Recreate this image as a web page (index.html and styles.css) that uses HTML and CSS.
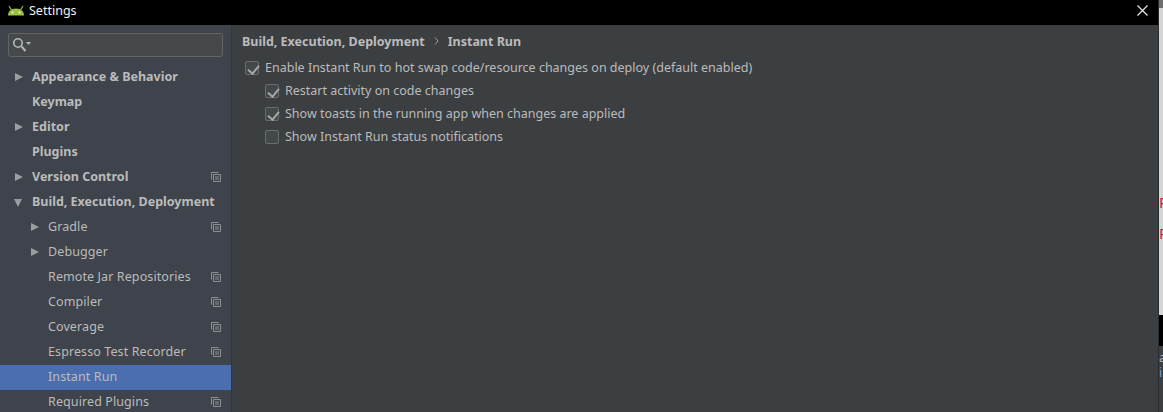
FILE: index.html
```html
<!DOCTYPE html>
<html lang="en">
<head>
    <meta charset="UTF-8">
    <title>Settings</title>
    <link rel="stylesheet" href="styles.css">
</head>
<body>
    <div class="window">
        <div class="titlebar">
            <svg class="logo" width="16" height="10" viewBox="0 0 16 10">
                <path d="M0 9.500C0 5.500 3 2.500 8 2.500s8 3 8 7z" fill="#9ac03f"/>
                <path d="M3.500 4 1 .2M12.500 4 15 .2" stroke="#9ac03f" stroke-width="1.200"/>
                <circle cx="4.500" cy="6.500" r="1" fill="#e8f2d0"/>
                <circle cx="11.500" cy="6.500" r="1" fill="#e8f2d0"/>
            </svg>
            <span class="title">Settings</span>
            <svg class="close" width="11" height="11" viewBox="0 0 11 11">
                <path d="M.5.5l10 10M10.500.5l-10 10" stroke="#e8e8e8" stroke-width="1.200"/>
            </svg>
        </div>
        <div class="main">
            <div class="sidebar">
                <div class="search">
                    <svg width="20" height="14" viewBox="0 0 20 14">
                        <circle cx="5" cy="5" r="4.200" fill="none" stroke="#b4b8bb" stroke-width="1.600"/>
                        <path d="M8.500 8.500l4 4.500" stroke="#b4b8bb" stroke-width="2"/>
                        <path d="M13 4h5L15.500 7z" fill="#b4b8bb"/>
                    </svg>
                </div>
                <ul class="tree">
                    <li class="row top"><i class="arrow"></i><span>Appearance &amp; Behavior</span></li>
                    <li class="row top"><span>Keymap</span></li>
                    <li class="row top"><i class="arrow"></i><span>Editor</span></li>
                    <li class="row top"><span>Plugins</span></li>
                    <li class="row top"><i class="arrow"></i><span>Version Control</span><svg class="copy" width="10" height="10" viewBox="0 0 10 10"><use href="#copy-icon"/></svg></li>
                    <li class="row top"><i class="arrow open"></i><span>Build, Execution, Deployment</span></li>
                    <li class="row sub"><i class="arrow"></i><span>Gradle</span><svg class="copy" width="10" height="10" viewBox="0 0 10 10"><use href="#copy-icon"/></svg></li>
                    <li class="row sub"><i class="arrow"></i><span>Debugger</span></li>
                    <li class="row sub"><span>Remote Jar Repositories</span><svg class="copy" width="10" height="10" viewBox="0 0 10 10"><use href="#copy-icon"/></svg></li>
                    <li class="row sub"><span>Compiler</span><svg class="copy" width="10" height="10" viewBox="0 0 10 10"><use href="#copy-icon"/></svg></li>
                    <li class="row sub"><span>Coverage</span><svg class="copy" width="10" height="10" viewBox="0 0 10 10"><use href="#copy-icon"/></svg></li>
                    <li class="row sub"><span>Espresso Test Recorder</span><svg class="copy" width="10" height="10" viewBox="0 0 10 10"><use href="#copy-icon"/></svg></li>
                    <li class="row sub selected"><span>Instant Run</span></li>
                    <li class="row sub"><span>Required Plugins</span><svg class="copy" width="10" height="10" viewBox="0 0 10 10"><use href="#copy-icon"/></svg></li>
                </ul>
            </div>
            <div class="content">
                <div class="crumbs">
                    <span>Build, Execution, Deployment</span>
                    <svg width="5" height="8" viewBox="0 0 5 8"><path d="M1 .5 4 4 1 7.500" fill="none" stroke="#9a9d9f"/></svg>
                    <span>Instant Run</span>
                </div>
                <label class="check"><i class="box on"></i>Enable Instant Run to hot swap code/resource changes on deploy (default enabled)</label>
                <div class="options">
                    <label class="check"><i class="box on"></i>Restart activity on code changes</label>
                    <label class="check"><i class="box on"></i>Show toasts in the running app when changes are applied</label>
                    <label class="check"><i class="box"></i>Show Instant Run status notifications</label>
                </div>
            </div>
        </div>
    </div>

    <!-- what shows behind the dialog on the right -->
    <div class="behind">
        <div class="behind-top"></div>
        <div class="behind-light"><b>P</b><b>P</b></div>
        <div class="behind-black"></div>
        <div class="behind-dark"><b>a</b><b class="blue">i</b></div>
    </div>

    <svg class="defs" width="0" height="0">
        <symbol id="copy-icon" viewBox="0 0 10 10">
            <path d="M.5 7.500V.5h7" fill="none" stroke="#8c9094"/>
            <path d="M2.500 2.500h7v7h-7zM4 5h4M4 7h4" fill="none" stroke="#8c9094"/>
        </symbol>
    </svg>
</body>
</html>
```

FILE: styles.css
```css
/* Basic Styling */
* {
    box-sizing: border-box;
}

body {
    display: flex;
    height: 412px;
    margin: 0;
    overflow: hidden;
    font-family: "Noto Sans", "Open Sans", sans-serif;
    font-size: 12.500px;
    color: #bbbbbb;
    background-color: #3b3f42;
}

.window {
    flex: none;
    width: 1158px;
    display: flex;
    flex-direction: column;
}

.titlebar {
    height: 25px;
    display: flex;
    align-items: center;
    padding: 0 10px 4px 8px;
    background-color: #000;
    color: #f0f0f0;
}

.logo {
    margin-right: 5px;
}

.title {
    flex: 1;
}

.main {
    flex: 1;
    display: flex;
    min-height: 0;
}

/* Sidebar */
.sidebar {
    width: 232px;
    padding-top: 8px;
    background-color: #3e434c;
    border-right: 1px solid #33373a;
    overflow: hidden;
}

.search {
    width: 215px;
    height: 24px;
    margin-left: 8px;
    padding: 4px 0 0 4px;
    background-color: #45494a;
    border: 1px solid #646464;
    border-radius: 3px;
}

.tree {
    list-style: none;
    margin: 8px 0 0;
    padding: 0;
}

.row {
    height: 25px;
    display: flex;
    align-items: center;
    position: relative;
    padding-right: 10px;
    padding-bottom: 3px;
    white-space: nowrap;
}

.row span {
    flex: 1;
}

.copy {
    margin-top: 1px;
}

.top {
    padding-left: 32px;
    font-weight: bold;
}

.sub {
    padding-left: 48px;
    letter-spacing: 0.1px;
}

.selected {
    background-color: #4b6eaf;
}

.arrow {
    position: absolute;
    top: 8px;
    width: 0;
    height: 0;
    border-style: solid;
    border-width: 4.500px 0 4.500px 8px;
    border-color: transparent transparent transparent #9b9ea0;
}

.top .arrow {
    left: 15px;
}

.sub .arrow {
    left: 31px;
}

.arrow.open {
    top: 9px;
    left: 14px;
    border-width: 8px 4.500px 0;
    border-color: #9b9ea0 transparent transparent;
}

.defs {
    position: absolute;
}

/* Content */
.content {
    flex: 1;
    padding: 6px 10px 0 10px;
}

.crumbs {
    height: 20px;
    display: flex;
    align-items: center;
    gap: 9px;
    margin-bottom: 5px;
    font-weight: bold;
}

.check {
    height: 23px;
    display: flex;
    align-items: center;
    gap: 6px;
    padding-left: 3px;
}

.options {
    padding-left: 20px;
}

.box {
    width: 14px;
    height: 14px;
    border: 1px solid #6b6b6b;
    border-radius: 2px;
    background-color: #43494a;
    position: relative;
}

.box.on::after {
    content: "";
    position: absolute;
    left: 4px;
    top: 1px;
    width: 5px;
    height: 9px;
    border: solid #a7a7a7;
    border-width: 0 2px 2px 0;
    transform: rotate(40deg);
}

/* Strip of the desktop behind the dialog */
.behind {
    flex: none;
    width: 5px;
    display: flex;
    flex-direction: column;
    overflow: hidden;
    border-left: 1px solid #2b2b2b;
}

.behind-top {
    height: 8px;
    background-color: #6e6e6e;
}

.behind-light {
    height: 307px;
    padding-top: 186px;
    background-color: #d6d6d6;
    color: #c2185b;
    font-size: 15px;
    line-height: 16px;
    overflow: hidden;
}

.behind-light b {
    display: block;
    height: 31px;
    font-weight: normal;
}

.behind-black {
    height: 31px;
    background-color: #000;
}

.behind-dark {
    flex: 1;
    padding-top: 4px;
    background-color: #3c3f41;
    color: #a9b7c6;
    line-height: 15px;
}

.behind-dark b {
    display: block;
    font-weight: normal;
}

.behind-dark .blue {
    color: #6a9fd8;
}
```
